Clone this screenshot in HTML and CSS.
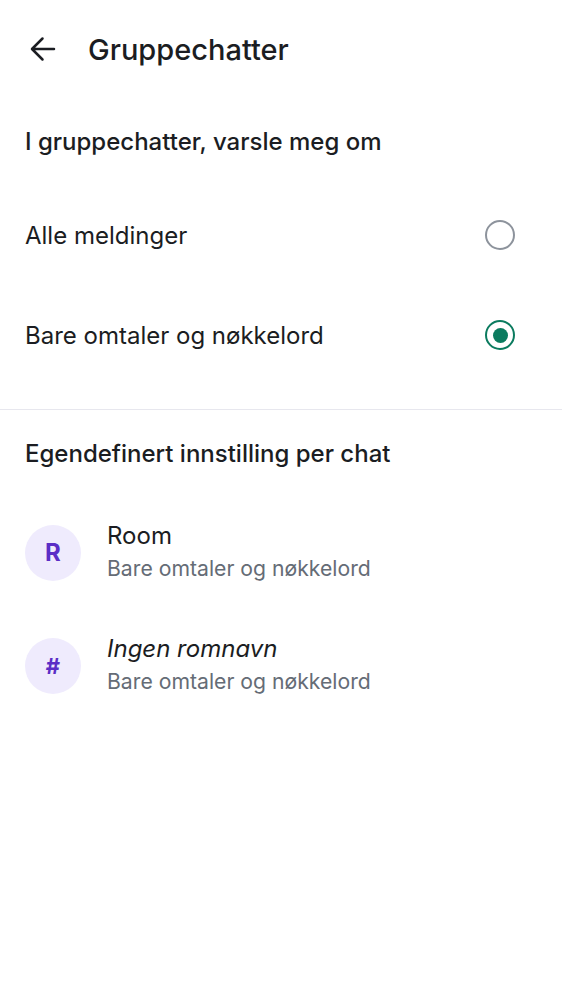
FILE: index.html
```html
<!DOCTYPE html>
<html lang="no">
<head>
<meta charset="utf-8">
<link rel="stylesheet" href="styles.css">
</head>
<body>
<div class="screen">
  <header class="topbar">
    <span class="back">
      <svg width="26" height="26" viewBox="0 0 26 26"><path d="M24 13H2.5M12.5 2.5L2 13l10.5 10.5" fill="none" stroke="#1b1d22" stroke-width="2.5" stroke-linecap="round" stroke-linejoin="round"/></svg>
    </span>
    <h1 class="title">Gruppechatter</h1>
  </header>

  <h2 class="section-title first">I gruppechatter, varsle meg om</h2>

  <div class="radio-row">
    <span class="radio-label">Alle meldinger</span>
    <span class="radio"></span>
  </div>
  <div class="radio-row">
    <span class="radio-label">Bare omtaler og nøkkelord</span>
    <span class="radio checked"></span>
  </div>

  <div class="divider"></div>

  <h2 class="section-title second">Egendefinert innstilling per chat</h2>

  <div class="room-row">
    <span class="avatar">R</span>
    <div class="room-text">
      <span class="room-name">Room</span>
      <span class="room-sub">Bare omtaler og nøkkelord</span>
    </div>
  </div>
  <div class="room-row">
    <span class="avatar hash">#</span>
    <div class="room-text">
      <span class="room-name italic">Ingen romnavn</span>
      <span class="room-sub">Bare omtaler og nøkkelord</span>
    </div>
  </div>
</div>
</body>
</html>
```

FILE: styles.css
```css
* { box-sizing: border-box; }
html, body { margin: 0; padding: 0; background: #ffffff; }
body {
  font-family: Inter, Roboto, "Noto Sans", sans-serif;
  color: #1b1d22;
  width: 562px;
  height: 1000px;
  overflow: hidden;
}
.screen { display: flex; flex-direction: column; }

.topbar {
  height: 98px;
  display: flex;
  align-items: center;
  padding-left: 30px;
}
.back { width: 26px; height: 26px; display: flex; }
.title {
  margin: 0 0 0 32px;
  font-size: 29px;
  font-weight: 500;
  line-height: 1;
}

.section-title {
  margin: 0;
  padding: 0 25px;
  font-size: 24px;
  font-weight: 500;
  display: flex;
  align-items: center;
}
.section-title.first { height: 87px; }
.section-title.second { height: 86px; }

.radio-row {
  height: 100px;
  display: flex;
  align-items: center;
  justify-content: space-between;
  padding: 0 47px 0 25px;
}
.radio-label { font-size: 24px; }
.radio {
  width: 30px;
  height: 30px;
  border-radius: 50%;
  border: 2.5px solid #8d939c;
  display: flex;
  align-items: center;
  justify-content: center;
}
.radio.checked { border-color: #0b7b5f; }
.radio.checked::after {
  content: "";
  width: 15px;
  height: 15px;
  border-radius: 50%;
  background: #0b7b5f;
}

.divider {
  height: 1px;
  background: #e7e7ee;
  margin-top: 24px;
}

.room-row {
  height: 113px;
  display: flex;
  align-items: center;
  padding-left: 25px;
}
.avatar {
  width: 56px;
  height: 56px;
  border-radius: 50%;
  background: #efebfd;
  color: #5b2ec6;
  font-size: 24px;
  font-weight: 700;
  display: flex;
  align-items: center;
  justify-content: center;
  flex-shrink: 0;
}
.avatar.hash { font-size: 22px; }
.room-text {
  display: flex;
  flex-direction: column;
  margin-left: 26px;
  margin-top: -2px;
}
.room-name { font-size: 24px; line-height: 32px; }
.room-name.italic { font-style: italic; }
.room-sub { font-size: 21.2px; line-height: 32px; color: #656c76; }
```
